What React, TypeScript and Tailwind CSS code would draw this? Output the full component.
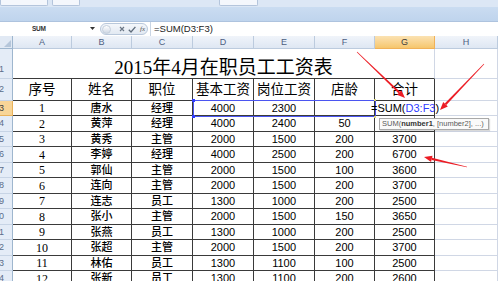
import React from "react";

const ROW_H = [30, 22, 15, 16, 15, 16, 15, 16, 15, 16, 15, 16, 15, 16];

const DATA: string[][] = [
  ["1", "唐水", "经理", "4000", "2300", "", ""],
  ["2", "黄萍", "经理", "4000", "2400", "50", ""],
  ["3", "黄秀", "主管", "2000", "1500", "200", "3700"],
  ["4", "李婷", "经理", "4000", "2500", "200", "6700"],
  ["5", "郭仙", "主管", "2000", "1500", "100", "3600"],
  ["6", "连向", "主管", "2000", "1500", "200", "3700"],
  ["7", "连志", "员工", "1300", "1000", "200", "2500"],
  ["8", "张小", "主管", "2000", "1500", "150", "3650"],
  ["9", "张燕", "员工", "1300", "1000", "200", "2500"],
  ["10", "张超", "主管", "2000", "1500", "200", "3700"],
  ["11", "林佑", "员工", "1300", "1100", "100", "2500"],
  ["12", "张新", "员工", "1300", "1100", "200", "2600"],
];

const HEADERS = ["序号", "姓名", "职位", "基本工资", "岗位工资", "店龄", "合计"];
const COLS = ["A", "B", "C", "D", "E", "F", "G", "H"];

function Arrow({ x1, y1, x2, y2 }: { x1: number; y1: number; x2: number; y2: number }) {
  const dx = x2 - x1;
  const dy = y2 - y1;
  const len = Math.sqrt(dx * dx + dy * dy);
  const ux = dx / len;
  const uy = dy / len;
  const px = -uy;
  const py = ux;
  const hl = 8;
  const hw = 3.2;
  const bx = x2 - ux * hl;
  const by = y2 - uy * hl;
  const tw = 0.3;
  const nw = 1.1;
  const body = [
    [x1 + px * tw, y1 + py * tw],
    [bx + px * nw, by + py * nw],
    [bx - px * nw, by - py * nw],
    [x1 - px * tw, y1 - py * tw],
  ]
    .map((p) => p.join(","))
    .join(" ");
  const head = [
    [x2, y2],
    [bx + px * hw, by + py * hw],
    [bx - px * hw, by - py * hw],
  ]
    .map((p) => p.join(","))
    .join(" ");
  return (
    <g fill="#ec1c24">
      <polygon points={body} />
      <polygon points={head} />
    </g>
  );
}

const serifCjk = "font-['Liberation_Serif','Noto_Sans_CJK_SC',serif]";
const sansCjk = "font-['Liberation_Sans','Noto_Sans_CJK_SC',sans-serif]";
const sans = "font-['Liberation_Sans',Arial,sans-serif]";

export default function App() {
  const dark = "border-[#3a3a3a]";
  return (
    <div className="relative w-[498px] h-[281px] overflow-hidden bg-white">
      {/* ribbon bottom strip */}
      <div className="flex h-[7px] bg-[#dce7f5]">
        <div className="w-[48px] h-[6px] bg-[#f4f7fc] border border-t-0 border-[#b4c5dc] rounded-b-[2px]" />
        <div className="ml-[4px] w-[28px] h-[6px] bg-[#f4f7fc] border border-t-0 border-[#b4c5dc] rounded-b-[2px]" />
        <div className="ml-[139px] w-[39px] h-[6px] bg-[#f4f7fc] border border-t-0 border-[#b4c5dc] rounded-b-[2px]" />
      </div>
      <div className="h-[15px] bg-gradient-to-b from-[#cadcf1] to-[#bfd4ed] border-b border-[#aec3de]" />
      {/* formula bar */}
      <div className="flex h-[14px] bg-white items-center">
        <div className="relative w-[97px] h-full flex items-center">
          <span className={`${sans} ml-[32px] text-[6.5px] font-bold text-[#333] leading-none tracking-[-0.3px]`}>SUM</span>
          <svg className="absolute left-[90px] top-[5px]" width="5" height="4" viewBox="0 0 5 4">
            <polygon points="0,0 5,0 2.5,3" fill="#333" />
          </svg>
        </div>
        <div className="ml-[3px] w-[48px] h-[12px] rounded-full border border-[#b9c8db] bg-gradient-to-b from-[#f4f7fb] to-[#e2e9f2] flex items-center">
          <div className="ml-[1px] w-[9px] h-[9px] rounded-full bg-gradient-to-b from-[#ffffff] to-[#cfd8e4] border border-[#c4cfdc]" />
          <svg className="ml-[8px]" width="6" height="6" viewBox="0 0 6 6">
            <path d="M1 1 L5 5 M5 1 L1 5" stroke="#6b7786" strokeWidth="1.2" />
          </svg>
          <svg className="ml-[3px]" width="8" height="7" viewBox="0 0 8 7">
            <path d="M0.8 3.8 L3 6 L7.4 0.8" stroke="#5f6c7b" strokeWidth="1.3" fill="none" />
          </svg>
          <span className="ml-[4px] text-[7px] italic font-['Liberation_Serif',serif] text-[#555] leading-none">fx</span>
        </div>
        <div className="ml-[2px] h-full flex-1 border-l border-[#c9d5e4] flex items-center">
          <span className={`${sans} ml-[3px] text-[9.5px] text-[#222] leading-none`}>=SUM(D3:F3)</span>
        </div>
      </div>

      {/* sheet */}
      <div className="relative grid grid-cols-[13px_59px_60px_61px_61px_61px_60px_60px_63px]">
        {/* column header row */}
        <div className="relative h-[13px] bg-[#e1e9f4] border-r border-b border-[#9eb6ce]">
          <svg className="absolute right-[1px] bottom-[1px]" width="7" height="7" viewBox="0 0 7 7">
            <polygon points="7,0 7,7 0,7" fill="#b5c6da" />
          </svg>
        </div>
        {COLS.map((c) => (
          <div
            key={c}
            className={`h-[13px] flex items-center justify-center border-r border-b ${sans} text-[9px] leading-none ${
              c === "G"
                ? "bg-gradient-to-b from-[#fbe2b2] to-[#f6c66c] border-[#f0b158] text-[#3a3a3a]"
                : "bg-gradient-to-b from-[#f0f4fa] to-[#dee7f3] border-[#bccbde] text-[#4d6082]"
            }`}
          >
            {c}
          </div>
        ))}

        {ROW_H.map((h, ri) => {
          const rowNum = ri + 1;
          const sel = rowNum === 3;
          const rh = (
            <div
              key={`rh${ri}`}
              style={{ height: h }}
              className={`flex ${ri === 0 ? "items-end pb-[4px]" : "items-center"} justify-end pr-[8px] overflow-hidden border-r border-b ${sans} text-[9px] leading-none ${
                sel
                  ? "bg-[#f8d597] border-[#e9b25b] text-[#3d3d3d]"
                  : "bg-[#e4ecf7] border-r-[#9eb6ce] border-b-[#c7d4e5] text-[#5b6d8a]"
              }`}
            >
              <span>{rowNum}</span>
            </div>
          );
          const cells: React.ReactNode[] = [rh];
          if (ri === 0) {
            cells.push(
              <div
                key="title"
                style={{ height: h }}
                className={`col-span-7 flex items-end justify-center pb-[1px] border-r border-b border-r-[#d0d7e5] border-b-[#3a3a3a] ${serifCjk} text-[19px] leading-none text-black`}
              >
                2015年4月在职员工工资表
              </div>
            );
          } else if (ri === 1) {
            HEADERS.forEach((t, ci) => {
              cells.push(
                <div
                  key={`h${ci}`}
                  style={{ height: h }}
                  className={`flex items-center justify-center border-r border-b ${dark} ${serifCjk} text-[13.5px] leading-none text-black whitespace-nowrap`}
                >
                  {t}
                </div>
              );
            });
          } else {
            const row = DATA[ri - 2];
            row.forEach((v, ci) => {
              let font = sans + " text-[11px]";
              if (ci === 0) font = "font-['Liberation_Serif',serif] text-[12px]";
              if (ci === 1 || ci === 2) font = sansCjk + " text-[11px] font-medium";
              const isEdit = ri === 2 && ci === 6;
              cells.push(
                <div
                  key={`c${ri}-${ci}`}
                  style={{ height: h }}
                  className={`flex items-center ${isEdit ? "justify-start" : "justify-center"} border-r border-b ${dark} ${font} leading-none text-black whitespace-nowrap`}
                >
                  {isEdit ? (
                    <span className={`${sans} text-[11px] ml-[-4px] relative z-10`}>
                      =SUM(<span className="text-[#2f3cff]">D3:F3</span>)
                    </span>
                  ) : (
                    v
                  )}
                </div>
              );
            });
          }
          cells.push(
            <div
              key={`hcol${ri}`}
              style={{ height: h }}
              className="border-r border-b border-[#d0d7e5]"
            />
          );
          return cells;
        })}

        {/* reference range highlight D3:F3 */}
        <div className="absolute left-[193px] top-[64px] w-[183px] h-[17px] border border-[#4b55f0] pointer-events-none" />
        <div className="absolute left-[192px] top-[63px] w-[3px] h-[3px] bg-[#2f3cff]" />
        <div className="absolute left-[192px] top-[79px] w-[3px] h-[3px] bg-[#2f3cff]" />
        <div className="absolute left-[374px] top-[63px] w-[2px] h-[2px] bg-[#d9d27a]" />
        <div className="absolute left-[374px] top-[80px] w-[2px] h-[2px] bg-[#d9d27a]" />

        {/* tooltip */}
        <div className="absolute left-[379px] top-[82px] w-[110px] h-[12px] bg-[#fafafa] border border-[#a9a9a9] shadow-[1px_1px_1px_rgba(0,0,0,0.15)] flex items-center">
          <span className={`${sans} ml-[2px] text-[7.5px] leading-none text-[#5a5a5a] whitespace-nowrap`}>
            SUM(<span className="font-bold text-[#333]">number1</span>, [number2], ...)
          </span>
        </div>
      </div>

      {/* red annotation arrows */}
      <svg className="absolute left-0 top-0 pointer-events-none" width="498" height="281" viewBox="0 0 498 281">
        <Arrow x1={357} y1={52} x2={405} y2={98} />
        <Arrow x1={484} y1={64} x2={440} y2={110} />
        <Arrow x1={467} y1={167} x2={424} y2={157} />
      </svg>
    </div>
  );
}
